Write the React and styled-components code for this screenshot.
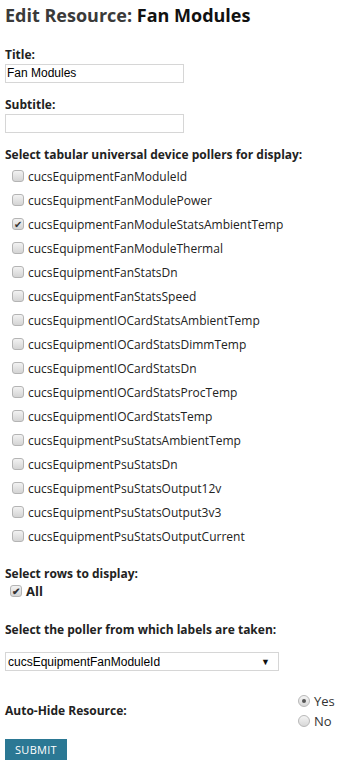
import React from "react";
import styled, { createGlobalStyle } from "styled-components";

const Global = createGlobalStyle`
  html, body { margin: 0; padding: 0; background: #fff; }
  body { font-family: "Open Sans", "Noto Sans", sans-serif; color: #222; }
`;

const Page = styled.div`
  padding: 4px 5px 2px 5px;
  width: 345px;
  box-sizing: border-box;
`;

const Heading = styled.h1`
  margin: 0 0 22px 0;
  font-size: 18px;
  line-height: 22px;
  font-weight: 700;
  color: #3a3a3a;
  letter-spacing: 0;
  b { color: #111; font-weight: 700; }
`;

const Label = styled.div`
  font-size: 12px;
  font-weight: 700;
  color: #222;
  line-height: 14px;
  margin-bottom: ${(p) => p.$mb ?? 2}px;
`;

const TextBox = styled.div`
  width: 179px;
  height: 19px;
  box-sizing: border-box;
  border: 1px solid #d6d6d6;
  font-family: "Liberation Sans", Arial, sans-serif;
  font-size: 12px;
  line-height: 17px;
  padding-left: 1px;
  color: #000;
  margin-bottom: 15px;
`;

const List = styled.div`
  display: flex;
  flex-direction: column;
  padding-left: 7px;
  margin-top: 1px;
  margin-bottom: 19px;
`;

const Row = styled.div`
  display: flex;
  align-items: center;
  height: 24px;
  gap: 4px;
  font-size: 12px;
  color: #222;
`;

const Box = styled.span`
  width: 12px;
  height: 12px;
  box-sizing: border-box;
  border: 1px solid #b4b4b4;
  border-radius: 3px;
  background: linear-gradient(#f2f2f2, #d4d4d4);
  display: flex;
  align-items: center;
  justify-content: center;
  font-size: 10px;
  line-height: 1;
  color: #333;
  flex-shrink: 0;
`;

const AllRow = styled.div`
  display: flex;
  align-items: center;
  gap: 4px;
  padding-left: 5px;
  height: 16px;
  font-size: 13px;
  font-weight: 700;
  margin-bottom: 24px;
`;

const SelectBox = styled.div`
  width: 274px;
  height: 19px;
  box-sizing: border-box;
  border: 1px solid #d6d6d6;
  display: flex;
  align-items: center;
  justify-content: space-between;
  padding: 0 8px 0 2px;
  font-family: "Liberation Sans", Arial, sans-serif;
  font-size: 12px;
  color: #000;
  margin-top: 15px;
  margin-bottom: 22px;
`;

const Arrow = styled.span`
  font-size: 9px;
  color: #111;
`;

const HideRow = styled.div`
  display: flex;
  justify-content: space-between;
  align-items: center;
  margin-bottom: 8px;
`;

const Radios = styled.div`
  display: flex;
  flex-direction: column;
  gap: 4px;
  width: 42px;
`;

const RadioRow = styled.div`
  display: flex;
  align-items: center;
  gap: 4px;
  height: 16px;
  font-size: 13px;
  color: #333;
`;

const Radio = styled.span`
  width: 12px;
  height: 12px;
  box-sizing: border-box;
  border-radius: 50%;
  border: 1px solid #b8b8b8;
  background: linear-gradient(#f4f4f4, #d8d8d8);
  display: flex;
  align-items: center;
  justify-content: center;
  &::after {
    content: "";
    width: 4px;
    height: 4px;
    border-radius: 50%;
    background: ${(p) => (p.$on ? "#555" : "transparent")};
  }
`;

const Submit = styled.button`
  width: 62px;
  height: 21px;
  border: none;
  background: #2b7894;
  color: #fff;
  font-family: "Open Sans", sans-serif;
  font-size: 11px;
  letter-spacing: 0.3px;
  padding: 0;
`;

const pollers = [
  "cucsEquipmentFanModuleId",
  "cucsEquipmentFanModulePower",
  "cucsEquipmentFanModuleStatsAmbientTemp",
  "cucsEquipmentFanModuleThermal",
  "cucsEquipmentFanStatsDn",
  "cucsEquipmentFanStatsSpeed",
  "cucsEquipmentIOCardStatsAmbientTemp",
  "cucsEquipmentIOCardStatsDimmTemp",
  "cucsEquipmentIOCardStatsDn",
  "cucsEquipmentIOCardStatsProcTemp",
  "cucsEquipmentIOCardStatsTemp",
  "cucsEquipmentPsuStatsAmbientTemp",
  "cucsEquipmentPsuStatsDn",
  "cucsEquipmentPsuStatsOutput12v",
  "cucsEquipmentPsuStatsOutput3v3",
  "cucsEquipmentPsuStatsOutputCurrent",
];

export default function App() {
  return (
    <Page>
      <Global />
      <Heading>
        Edit Resource: <b>Fan Modules</b>
      </Heading>
      <Label>Title:</Label>
      <TextBox>Fan Modules</TextBox>
      <Label>Subtitle:</Label>
      <TextBox />
      <Label>Select tabular universal device pollers for display:</Label>
      <List>
        {pollers.map((p, i) => (
          <Row key={p}>
            <Box>{i === 2 ? "✔" : ""}</Box>
            <span>{p}</span>
          </Row>
        ))}
      </List>
      <Label>Select rows to display:</Label>
      <AllRow>
        <Box>✔</Box>
        <span>All</span>
      </AllRow>
      <Label>Select the poller from which labels are taken:</Label>
      <SelectBox>
        <span>cucsEquipmentFanModuleId</span>
        <Arrow>▼</Arrow>
      </SelectBox>
      <HideRow>
        <Label $mb={0}>Auto-Hide Resource:</Label>
        <Radios>
          <RadioRow>
            <Radio $on />
            <span>Yes</span>
          </RadioRow>
          <RadioRow>
            <Radio />
            <span>No</span>
          </RadioRow>
        </Radios>
      </HideRow>
      <Submit>SUBMIT</Submit>
    </Page>
  );
}
